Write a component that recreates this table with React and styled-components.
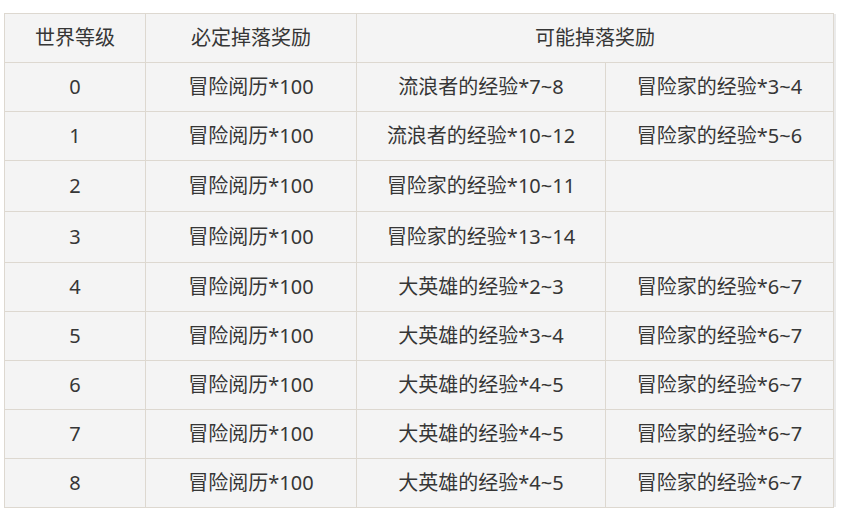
import React from "react";
import styled, { createGlobalStyle } from "styled-components";

const Global = createGlobalStyle`
  html, body { margin: 0; padding: 0; background: #ffffff; }
  body { font-family: "Noto Sans", "Noto Sans CJK SC", sans-serif; }
`;

const Page = styled.div`
  padding: 13px 0 0 4px;
`;

const Grid = styled.div`
  display: grid;
  width: max-content;
  grid-template-columns: 140px 210px 248px 227px;
  grid-template-rows: 48px 48px 48px 50px 50px 48px 48px 48px 48px 48px;
  gap: 1px;
  padding: 1px;
  background: #ddd8d0;
  box-shadow: 3px 0 0 -1px #ebebeb;
`;

const Cell = styled.div`
  display: flex;
  align-items: center;
  justify-content: center;
  background: #f4f4f4;
  color: #363636;
  font-family: "Noto Sans", "Noto Sans CJK SC", sans-serif;
  font-size: 20px;
  line-height: 1;
  white-space: nowrap;
  grid-column: ${(p) => (p.$span ? `span ${p.$span}` : "auto")};
  padding-bottom: 1px;
`;

const rows = [
  ["0", "冒险阅历*100", "流浪者的经验*7~8", "冒险家的经验*3~4"],
  ["1", "冒险阅历*100", "流浪者的经验*10~12", "冒险家的经验*5~6"],
  ["2", "冒险阅历*100", "冒险家的经验*10~11", ""],
  ["3", "冒险阅历*100", "冒险家的经验*13~14", ""],
  ["4", "冒险阅历*100", "大英雄的经验*2~3", "冒险家的经验*6~7"],
  ["5", "冒险阅历*100", "大英雄的经验*3~4", "冒险家的经验*6~7"],
  ["6", "冒险阅历*100", "大英雄的经验*4~5", "冒险家的经验*6~7"],
  ["7", "冒险阅历*100", "大英雄的经验*4~5", "冒险家的经验*6~7"],
  ["8", "冒险阅历*100", "大英雄的经验*4~5", "冒险家的经验*6~7"],
];

export default function App() {
  return (
    <>
      <Global />
      <Page>
        <Grid>
          <Cell>世界等级</Cell>
          <Cell>必定掉落奖励</Cell>
          <Cell $span={2}>可能掉落奖励</Cell>
          {rows.map((r, i) =>
            r.map((c, j) => <Cell key={`${i}-${j}`}>{c}</Cell>)
          )}
        </Grid>
      </Page>
    </>
  );
}
